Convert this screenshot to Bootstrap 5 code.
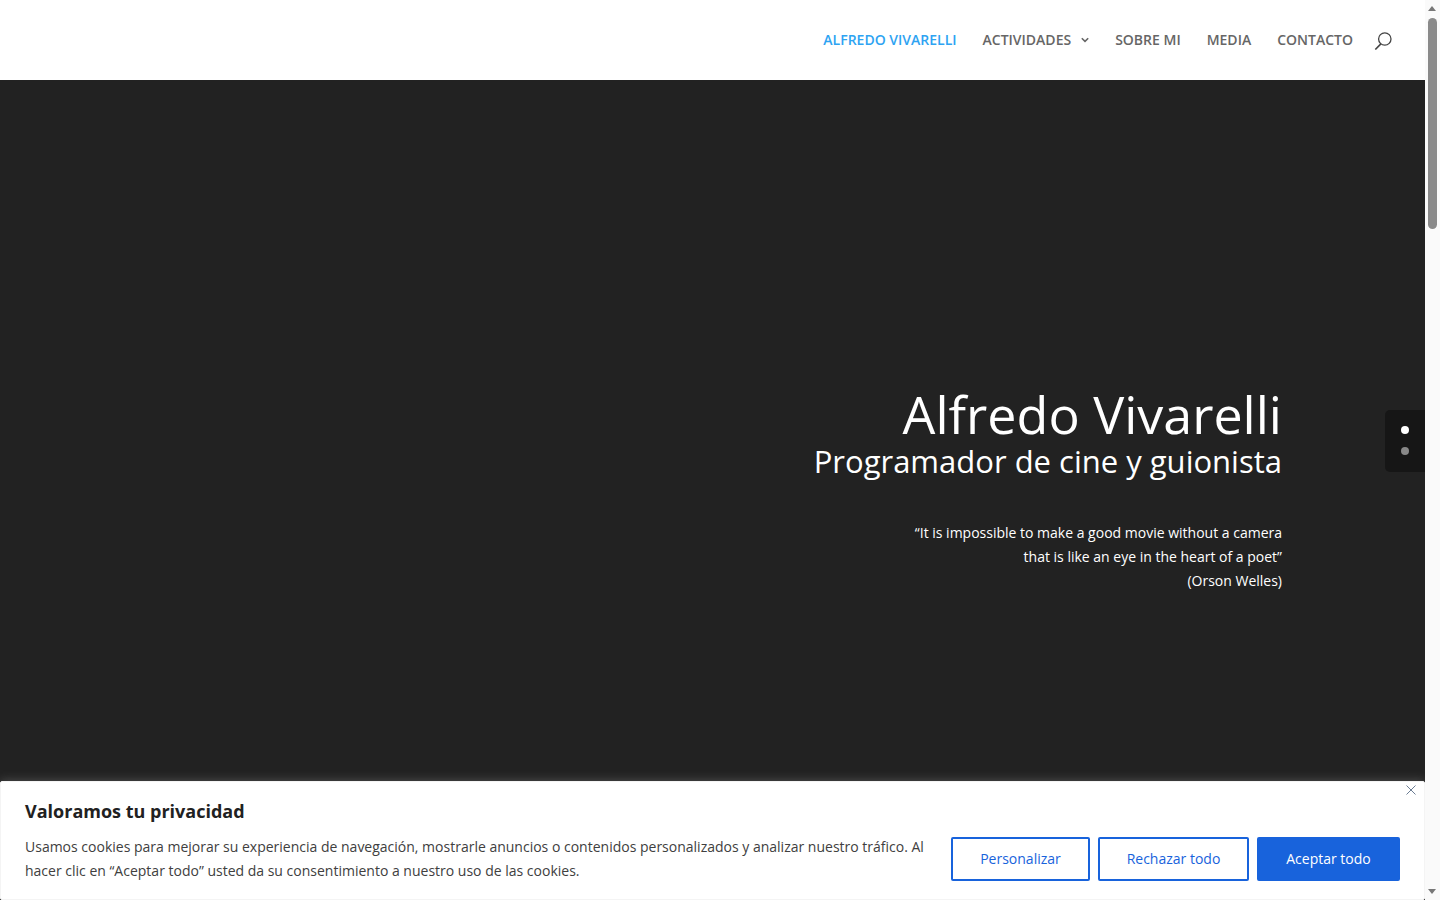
<!DOCTYPE html>
<html lang="es">
<head>
  <meta charset="UTF-8">
  <meta name="viewport" content="width=device-width, initial-scale=1">
  <title>Alfredo Vivarelli</title>
  <link href="https://cdn.jsdelivr.net/npm/bootstrap@5.3.0/dist/css/bootstrap.min.css" rel="stylesheet">
  <style>
    html, body { height: 100%; overflow: hidden; }
    body { font-family: "Open Sans", sans-serif; font-size: 14px; background: #fff; }
    .page-shell { height: 900px; }
    .page-main { width: 1425px; position: relative; }
    .top-bar { height: 80px; padding-right: 33px; }
    .top-link { color: #666; font-size: 14px; font-weight: 600; text-decoration: none; line-height: 20px; }
    .top-link.is-active { color: #2ea3f2; }
    .top-links { gap: 26px; }
    .caret-icon { margin-left: 10px; }
    .search-icon { margin-left: 21px; margin-top: 2px; }
    .hero { height: 820px; background: #222; padding: 308px 143px 0 0; color: #fff; }
    .hero-title { font-size: 52px; font-weight: 400; line-height: 52px; margin: 0 0 4px; }
    .hero-sub { font-size: 31px; font-weight: 400; line-height: 34px; margin: 0 0 43px; }
    .hero-quote { font-size: 14px; line-height: 24px; margin: 0; }
    .dot-nav { position: absolute; right: 0; top: 410px; width: 40px; height: 62px; background: #161616; border-radius: 5px 0 0 5px; padding-top: 16px; gap: 13px; }
    .dot-nav span { width: 8px; height: 8px; border-radius: 50%; background: #888; }
    .dot-nav span.is-on { background: #fff; }
    .cookie-box { position: absolute; left: 0; right: 0; bottom: 0; height: 119px; background: #fff; padding: 19px 24px 0 24px; border: 1px solid #f4f4f4; box-shadow: 0 -1px 10px 0 rgba(172,171,171,.3); border-radius: 2px; }
    .cookie-title { font-size: 18px; font-weight: 700; color: #212121; line-height: 21px; margin: 0 0 13px; }
    .cookie-text { font-size: 14px; line-height: 24px; color: #404040; width: 905px; margin: 0; }
    .cookie-btn { height: 44px; font-family: inherit; font-size: 14px; border-radius: 2px; border: 2px solid #1863dc; padding: 0 0 2px; }
    .cookie-btn.plain { background: #fff; color: #1863dc; }
    .cookie-btn.solid { background: #1863dc; color: #fff; }
    .w-custom { width: 139px; }
    .w-reject { width: 151px; }
    .w-accept { width: 143px; }
    .cookie-btns { gap: 8px; margin-top: 2px; }
    .cookie-close { position: absolute; top: 3px; right: 8px; line-height: 0; }
    .fake-scroll { width: 15px; background: #fafafa; position: relative; }
    .scroll-thumb { position: absolute; left: 3px; top: 18px; width: 9px; height: 211px; background: #8a8a8a; border-radius: 5px; }
    .scroll-up, .scroll-down { position: absolute; left: 3px; width: 0; height: 0; border-left: 4.5px solid transparent; border-right: 4.5px solid transparent; }
    .scroll-up { top: 6px; border-bottom: 5px solid #777; }
    .scroll-down { bottom: 6px; border-top: 5px solid #777; }
  </style>
</head>
<body>
  <div class="page-shell d-flex">
    <div class="page-main">
      <nav class="top-bar d-flex align-items-center justify-content-end bg-white">
        <div class="top-links d-flex align-items-center">
          <a href="#" class="top-link is-active">ALFREDO VIVARELLI</a>
          <a href="#" class="top-link d-flex align-items-center">ACTIVIDADES
            <svg class="caret-icon" width="8" height="6" viewBox="0 0 8 6" fill="none" stroke="#666" stroke-width="1.6"><path d="M.8 1.2 4 4.4l3.2-3.2"/></svg>
          </a>
          <a href="#" class="top-link">SOBRE MI</a>
          <a href="#" class="top-link">MEDIA</a>
          <a href="#" class="top-link">CONTACTO</a>
        </div>
        <svg class="search-icon" width="18" height="18" viewBox="0 0 18 18" fill="none" stroke="#444" stroke-width="1.3"><circle cx="10.8" cy="7" r="6.2"/><path d="M6.9 11.9 1.3 17.5" stroke-width="1.6"/></svg>
      </nav>
      <section class="hero text-end">
        <h1 class="hero-title">Alfredo Vivarelli</h1>
        <h2 class="hero-sub">Programador de cine y guionista</h2>
        <p class="hero-quote">“It is impossible to make a good movie without a camera<br>that is like an eye in the heart of a poet”<br>(Orson Welles)</p>
      </section>
      <div class="dot-nav d-flex flex-column align-items-center">
        <span class="is-on"></span>
        <span></span>
      </div>
      <div class="cookie-box">
        <button type="button" class="cookie-close btn p-0 border-0" aria-label="Cerrar">
          <svg width="10" height="10" viewBox="0 0 10 10" stroke="#6b7c93" stroke-width="1"><path d="M.5.5l9 9M9.500.5l-9 9"/></svg>
        </button>
        <h5 class="cookie-title">Valoramos tu privacidad</h5>
        <div class="d-flex justify-content-between align-items-start">
          <p class="cookie-text">Usamos cookies para mejorar su experiencia de navegación, mostrarle anuncios o contenidos personalizados y analizar nuestro tráfico. Al hacer clic en “Aceptar todo” usted da su consentimiento a nuestro uso de las cookies.</p>
          <div class="cookie-btns d-flex">
            <button type="button" class="cookie-btn plain w-custom">Personalizar</button>
            <button type="button" class="cookie-btn plain w-reject">Rechazar todo</button>
            <button type="button" class="cookie-btn solid w-accept">Aceptar todo</button>
          </div>
        </div>
      </div>
    </div>
    <div class="fake-scroll">
      <div class="scroll-up"></div>
      <div class="scroll-thumb"></div>
      <div class="scroll-down"></div>
    </div>
  </div>
  <script src="https://cdn.jsdelivr.net/npm/bootstrap@5.3.0/dist/js/bootstrap.bundle.min.js"></script>
</body>
</html>
